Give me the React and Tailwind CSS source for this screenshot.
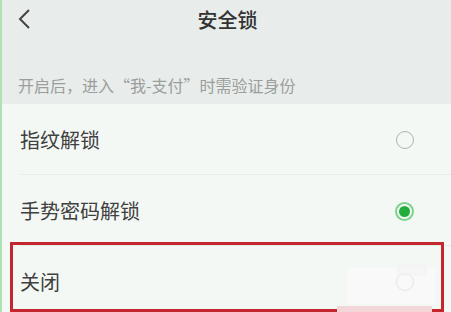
import React from "react";

const options = [
  { id: "finger", label: "指纹解锁", checked: false },
  { id: "gesture", label: "手势密码解锁", checked: true },
  { id: "off", label: "关闭", checked: false },
];

const Radio = ({ checked }) =>
  checked ? (
    <span className="w-[19px] h-[19px] rounded-full border-2 border-[#7fd28c] flex items-center justify-center">
      <span className="w-[11px] h-[11px] rounded-full bg-[#23ad3c]" />
    </span>
  ) : (
    <span className="w-[18px] h-[18px] rounded-full border-[1.5px] border-[#b0b4b1]" />
  );

const App = () => {
  return (
    <div
      className="relative w-[451px] h-[312px] overflow-hidden bg-[#f4f8f4] border-l-2 border-[#ade3b4]"
      style={{ fontFamily: '"Noto Sans CJK SC", "Noto Sans", sans-serif' }}
    >
      {/* Header */}
      <div className="bg-[#e8ecea] h-[104px] flex flex-col">
        <div className="h-[40px] flex items-center relative">
          <svg
            className="absolute left-[15px] top-[8px]"
            width="16"
            height="22"
            viewBox="0 0 16 22"
            fill="none"
          >
            <path d="M12 2 L3 11 L12 20" stroke="#444" strokeWidth="2" />
          </svg>
          <h1 className="flex-1 text-center text-[20px] text-[#333] font-medium m-0 pl-[2px]">
            安全锁
          </h1>
        </div>
        <p className="mt-[37px] ml-[16px] text-[16px] text-[#9b9e9c] m-0 leading-none">
          开启后，进入“我-支付”时需验证身份
        </p>
      </div>

      {/* Options */}
      <div className="flex flex-col">
        {options.map((o, i) => (
          <div key={o.id} className="relative">
            <div className="h-[70px] flex items-center justify-between pl-[18px] pr-[37px] pt-[2px]">
              <span className="text-[20px] text-[#404040]">{o.label}</span>
              <Radio checked={o.checked} />
            </div>
            {i < options.length - 1 && (
              <div className="ml-[18px] h-px bg-[#e7ece8]" />
            )}
            {o.id === "off" && (
              <div className="absolute left-[8px] top-[-4px] w-[434px] h-[70px] border-[3px] border-[#c3262c] pointer-events-none" />
            )}
          </div>
        ))}
      </div>

      {/* watermark blur */}
      <div className="absolute left-[345px] top-[268px] w-[88px] h-[36px] bg-[#f9f9f9] opacity-70" />
      <div className="absolute left-[395px] top-[264px] w-[30px] h-[12px] bg-[#f2f2f2] opacity-60" />
      <div className="absolute left-[335px] top-[306px] w-[95px] h-[6px] bg-[#f3d6d8]" />
    </div>
  );
};

export default App;
